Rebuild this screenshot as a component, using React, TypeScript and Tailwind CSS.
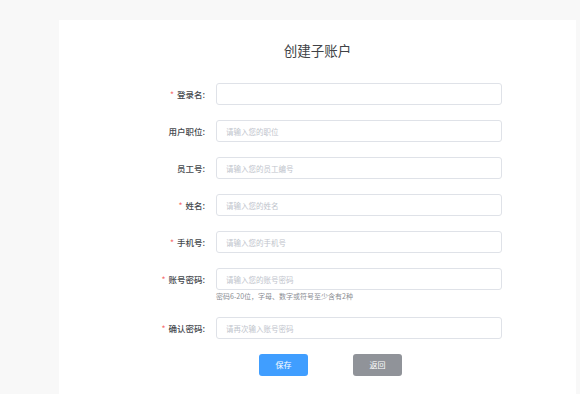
import React from "react";

const font = { fontFamily: '"Noto Sans CJK SC", "Noto Sans", sans-serif' };

type Row = { label: string; required: boolean; placeholder: string; hint?: string };

const rows: Row[] = [
  { label: "登录名:", required: true, placeholder: "" },
  { label: "用户职位:", required: false, placeholder: "请输入您的职位" },
  { label: "员工号:", required: false, placeholder: "请输入您的员工编号" },
  { label: "姓名:", required: true, placeholder: "请输入您的姓名" },
  { label: "手机号:", required: true, placeholder: "请输入您的手机号" },
  {
    label: "账号密码:",
    required: true,
    placeholder: "请输入您的账号密码",
    hint: "密码6-20位，字母、数字或符号至少含有2种",
  },
  { label: "确认密码:", required: true, placeholder: "请再次输入账号密码" },
];

export default function App() {
  return (
    <div className="h-screen w-full overflow-hidden bg-[#f8f8f8] flex flex-col" style={font}>
      <div className="ml-[59px] mt-[20px] w-[517px] flex-1 bg-white flex flex-col">
        <div className="mt-[20px] h-[20px] flex items-center justify-center text-[13.5px] leading-[20px] text-[#404246]">
          创建子账户
        </div>
        <div className="mt-[23px] flex flex-col gap-[15px]">
          {rows.map((r) => (
            <div key={r.label} className="flex flex-col">
              <div className="flex items-center h-[22px]">
                <div className="w-[157px] pr-[11px] flex justify-end items-center text-[8.5px] font-medium text-[#45484d]">
                  {r.required && <span className="text-[#f56c6c] mr-[3px] font-normal">*</span>}
                  <span>{r.label}</span>
                </div>
                <input
                  className="w-[286px] h-[22px] border border-[#dfe2e8] rounded-[3px] px-[9px] text-[7.5px] text-[#606266] placeholder:text-[#c0c4cc] outline-none"
                  placeholder={r.placeholder}
                />
              </div>
              {r.hint && (
                <div className="ml-[157px] h-[12px] leading-[13px] text-[7px] text-[#8a8d93]">{r.hint}</div>
              )}
            </div>
          ))}
          <div className="flex items-center ml-[200px] gap-[45px]">
            <button className="w-[49px] h-[22px] rounded-[3px] bg-[#409eff] text-white text-[8px]">保存</button>
            <button className="w-[49px] h-[22px] rounded-[3px] bg-[#909399] text-white text-[8px]">返回</button>
          </div>
        </div>
      </div>
    </div>
  );
}
